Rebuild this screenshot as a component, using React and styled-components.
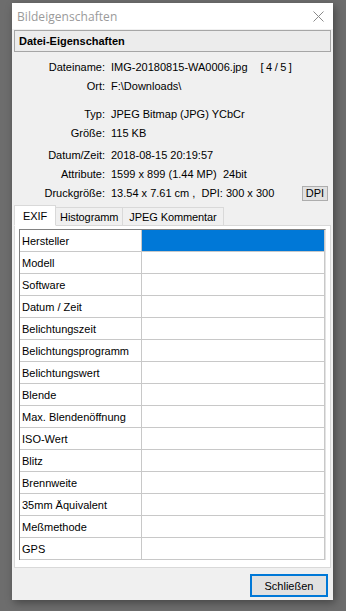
import React from "react";
import styled, { createGlobalStyle } from "styled-components";

const Global = createGlobalStyle`
  html, body { margin: 0; padding: 0; background: #6d6d6d; }
  body { width: 346px; height: 611px; overflow: hidden; font-family: "Liberation Sans", Arial, sans-serif; }
`;

const Stage = styled.div`
  width: 346px;
  height: 611px;
  padding: 3px 0 0 12px;
  box-sizing: border-box;
`;

const Window = styled.div`
  width: 321px;
  height: 597px;
  background: #f0f0f0;
  box-shadow: 2px 3px 8px rgba(0, 0, 0, 0.35);
  display: flex;
  flex-direction: column;
  box-sizing: border-box;
`;

const TitleBar = styled.div`
  height: 26px;
  background: #ffffff;
  display: flex;
  align-items: center;
  justify-content: space-between;
  padding: 0 9px 0 5px;
  flex-shrink: 0;
`;

const Title = styled.span`
  font-family: "Open Sans", "Noto Sans", sans-serif;
  font-size: 12px;
  color: #9a9a9a;
  letter-spacing: 0.05px;
`;

const Content = styled.div`
  flex: 1;
  display: flex;
  flex-direction: column;
  padding: 1px 2px 0 2px;
`;

const Header = styled.div`
  height: 20px;
  border: 1px solid #a6a6a6;
  background: #ececec;
  display: flex;
  align-items: center;
  padding-left: 4px;
  font-size: 11px;
  font-weight: bold;
  color: #000;
`;

const InfoList = styled.div`
  display: flex;
  flex-direction: column;
  margin-top: 7px;
`;

const InfoRow = styled.div`
  display: flex;
  align-items: center;
  height: 16px;
  margin-top: ${(p) => p.$gap}px;
  font-size: 11px;
  color: #000;
`;

const Label = styled.span`
  width: 91px;
  text-align: right;
  flex-shrink: 0;
`;

const Value = styled.span`
  margin-left: 6px;
  white-space: pre;
`;

const Counter = styled.span`
  margin-left: 13px;
  white-space: pre;
  letter-spacing: -0.3px;
`;

const DpiButton = styled.button`
  margin-left: auto;
  margin-right: 3px;
  width: 26px;
  height: 15px;
  padding: 0;
  border: 1px solid #adadad;
  background: #e1e1e1;
  font-family: "Liberation Sans", Arial, sans-serif;
  font-size: 11px;
  color: #000;
  display: flex;
  align-items: center;
  justify-content: center;
`;

const Tabs = styled.div`
  display: flex;
  align-items: flex-end;
  height: 20px;
  margin-top: 4px;
  position: relative;
  z-index: 1;
`;

const Tab = styled.div`
  height: ${(p) => (p.$active ? 21 : 18)}px;
  box-sizing: border-box;
  white-space: nowrap;
  border: 1px solid #d9d9d9;
  border-bottom: ${(p) => (p.$active ? "1px solid #ffffff" : "none")};
  border-left: ${(p) => (p.$first ? "1px solid #d9d9d9" : "none")};
  background: ${(p) => (p.$active ? "#ffffff" : "#f0f0f0")};
  font-size: 11px;
  letter-spacing: -0.1px;
  color: #000;
  display: flex;
  align-items: center;
  padding: 0 ${(p) => p.$pad}px;
  margin-bottom: ${(p) => (p.$active ? -1 : 0)}px;
`;

const Panel = styled.div`
  height: 343px;
  border: 1px solid #d9d9d9;
  background: #ffffff;
  padding: 3px 4px 0 4px;
  box-sizing: border-box;
`;

const Table = styled.div`
  border-top: 1px solid #828282;
  border-left: 1px solid #828282;
  border-right: 1px solid #e3e3e3;
  display: grid;
  grid-template-columns: 122px 1fr;
  background: #fff;
`;

const Cell = styled.div`
  height: 22px;
  box-sizing: border-box;
  border-right: 1px solid #c8c8c8;
  border-bottom: 1px solid #c8c8c8;
  background: ${(p) => (p.$selected ? "#0078d7" : "#ffffff")};
  font-size: 11px;
  color: #000;
  display: flex;
  align-items: center;
  padding-left: 2px;
`;

const Footer = styled.div`
  display: flex;
  justify-content: flex-end;
  padding: 6px 3px 0 0;
`;

const CloseButton = styled.button`
  width: 78px;
  height: 23px;
  border: 2px solid #0078d7;
  background: #e1e1e1;
  font-family: "Liberation Sans", Arial, sans-serif;
  font-size: 11px;
  color: #000;
  padding: 0;
`;

const info = [
  { label: "Dateiname:", value: "IMG-20180815-WA0006.jpg", gap: 0, counter: "[ 4 / 5 ]" },
  { label: "Ort:", value: "F:\\Downloads\\", gap: 3 },
  { label: "Typ:", value: "JPEG Bitmap (JPG) YCbCr", gap: 12 },
  { label: "Größe:", value: "115 KB", gap: 3 },
  { label: "Datum/Zeit:", value: "2018-08-15 20:19:57", gap: 6 },
  { label: "Attribute:", value: "1599 x 899 (1.44 MP)  24bit", gap: 3 },
  { label: "Druckgröße:", value: "13.54 x 7.61 cm ,  DPI: 300 x 300", gap: 3, dpi: true },
];

const exif = [
  "Hersteller",
  "Modell",
  "Software",
  "Datum / Zeit",
  "Belichtungszeit",
  "Belichtungsprogramm",
  "Belichtungswert",
  "Blende",
  "Max. Blendenöffnung",
  "ISO-Wert",
  "Blitz",
  "Brennweite",
  "35mm Äquivalent",
  "Meßmethode",
  "GPS",
];

const CloseIcon = () => (
  <svg width="11" height="11" viewBox="0 0 11 11">
    <path d="M0.5 0.5 L10.5 10.5 M10.5 0.5 L0.5 10.5" stroke="#8a8a8a" strokeWidth="1" fill="none" />
  </svg>
);

export default function App() {
  return (
    <>
      <Global />
      <Stage>
        <Window>
          <TitleBar>
            <Title>Bildeigenschaften</Title>
            <CloseIcon />
          </TitleBar>
          <Content>
            <Header>Datei-Eigenschaften</Header>
            <InfoList>
              {info.map((r) => (
                <InfoRow key={r.label} $gap={r.gap}>
                  <Label>{r.label}</Label>
                  <Value>{r.value}</Value>
                  {r.counter && <Counter>{r.counter}</Counter>}
                  {r.dpi && <DpiButton>DPI</DpiButton>}
                </InfoRow>
              ))}
            </InfoList>
            <Tabs>
              <Tab $active $first $pad={8}>EXIF</Tab>
              <Tab $pad={4}>Histogramm</Tab>
              <Tab $pad={6}>JPEG Kommentar</Tab>
            </Tabs>
            <Panel>
              <Table>
                {exif.map((name, i) => (
                  <React.Fragment key={name}>
                    <Cell>{name}</Cell>
                    <Cell $selected={i === 0} />
                  </React.Fragment>
                ))}
              </Table>
            </Panel>
            <Footer>
              <CloseButton>Schließen</CloseButton>
            </Footer>
          </Content>
        </Window>
      </Stage>
    </>
  );
}
